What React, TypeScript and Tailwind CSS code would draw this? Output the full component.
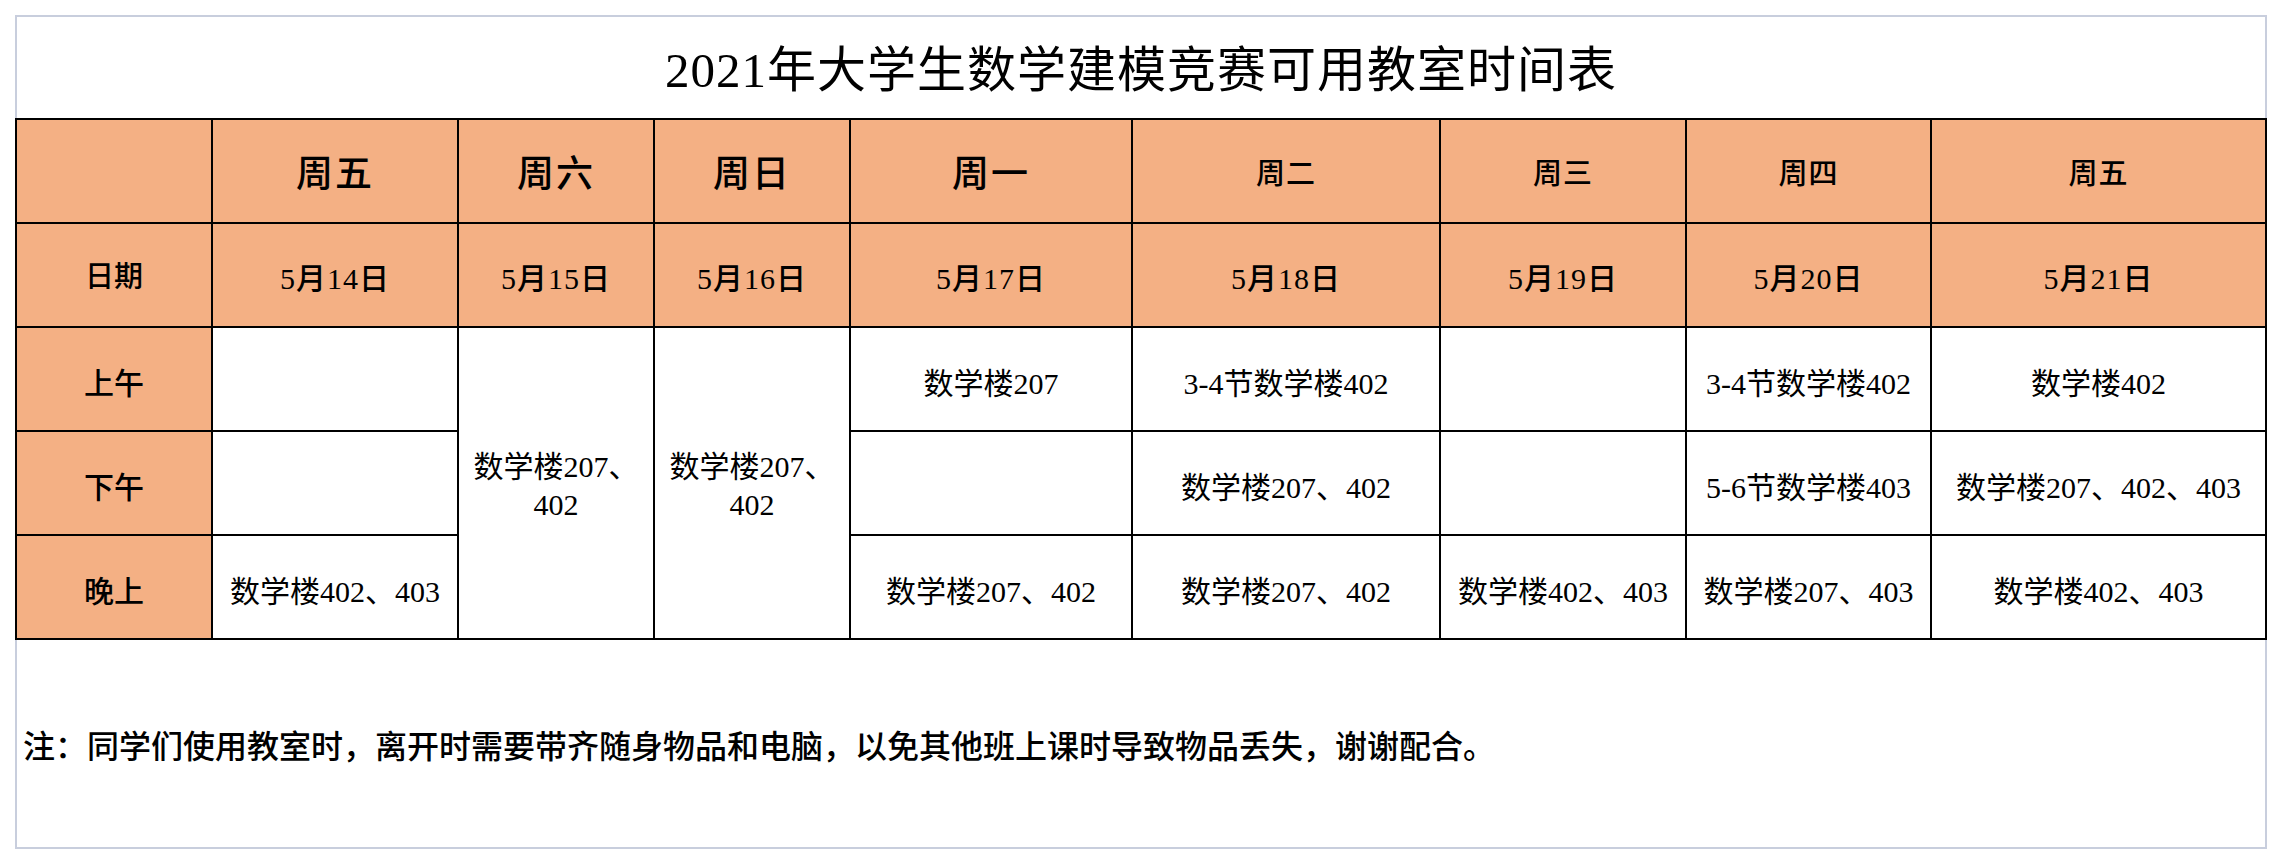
import React from "react";

const font = "font-['Liberation_Serif','Noto_Sans_CJK_SC',serif]";

const days = [
  { name: "周五", big: true, date: "5月14日" },
  { name: "周六", big: true, date: "5月15日" },
  { name: "周日", big: true, date: "5月16日" },
  { name: "周一", big: true, date: "5月17日" },
  { name: "周二", big: false, date: "5月18日" },
  { name: "周三", big: false, date: "5月19日" },
  { name: "周四", big: false, date: "5月20日" },
  { name: "周五", big: false, date: "5月21日" },
];

// 周六、周日 两列合并，单独处理
const slots = [
  { label: "上午", cells: ["", "数学楼207", "3-4节数学楼402", "", "3-4节数学楼402", "数学楼402"] },
  { label: "下午", cells: ["", "", "数学楼207、402", "", "5-6节数学楼403", "数学楼207、402、403"] },
  { label: "晚上", cells: ["数学楼402、403", "数学楼207、402", "数学楼207、402", "数学楼402、403", "数学楼207、403", "数学楼402、403"] },
];

function Cell({ className = "", children }: { className?: string; children?: React.ReactNode }) {
  return <div className={`flex items-center justify-center text-center ${className}`}>{children}</div>;
}

export default function App() {
  return (
    <div className={`min-h-screen bg-white pl-[15px] pt-[15px] text-black ${font}`}>
      <div className="flex h-[834px] w-[2252px] flex-col border-2 border-[#c8cedd]">
        <div className="flex h-[101px] items-center justify-center pt-[6px] text-[49px] tracking-[1px]">2021年大学生数学建模竞赛可用教室时间表</div>

        <div className="-mx-[2px] grid grid-cols-[194px_244px_194px_194px_280px_306px_244px_243px_333px] grid-rows-[repeat(5,102px)] gap-[2px] bg-black p-[2px]">
          <Cell className="bg-[#f4b084]" />
          {days.map((d, i) => (
            <Cell key={"h" + i} className={`bg-[#f4b084] pt-[8px] font-medium ${d.big ? "text-[37px] tracking-[2px]" : "text-[29px] tracking-[1px]"}`}>
              {d.name}
            </Cell>
          ))}

          <Cell className="bg-[#f4b084] pt-[6px] text-[29px] font-medium">日期</Cell>
          {days.map((d, i) => (
            <Cell key={"d" + i} className="bg-[#f4b084] pt-[6px] text-[30px] font-medium tracking-[1px]">
              {d.date}
            </Cell>
          ))}

          {slots.map((s, r) => (
            <React.Fragment key={s.label}>
              <Cell className="bg-[#f4b084] pt-[8px] text-[30px] font-medium">{s.label}</Cell>
              <Cell className="bg-white pt-[8px] text-[30px]">{s.cells[0]}</Cell>
              {r === 0 && (
                <>
                  <Cell className="row-span-3 bg-white pt-[6px] text-[30px] leading-[38px]">
                    数学楼207、<br />402
                  </Cell>
                  <Cell className="row-span-3 bg-white pt-[6px] text-[30px] leading-[38px]">
                    数学楼207、<br />402
                  </Cell>
                </>
              )}
              {s.cells.slice(1).map((c, j) => (
                <Cell key={j} className="bg-white pt-[8px] text-[30px]">
                  {c}
                </Cell>
              ))}
            </React.Fragment>
          ))}
        </div>

        <div className="flex flex-1 items-center pl-[6px] pt-[6px] text-[32px] font-medium">
          注：同学们使用教室时，离开时需要带齐随身物品和电脑，以免其他班上课时导致物品丢失，谢谢配合。
        </div>
      </div>
    </div>
  );
}
